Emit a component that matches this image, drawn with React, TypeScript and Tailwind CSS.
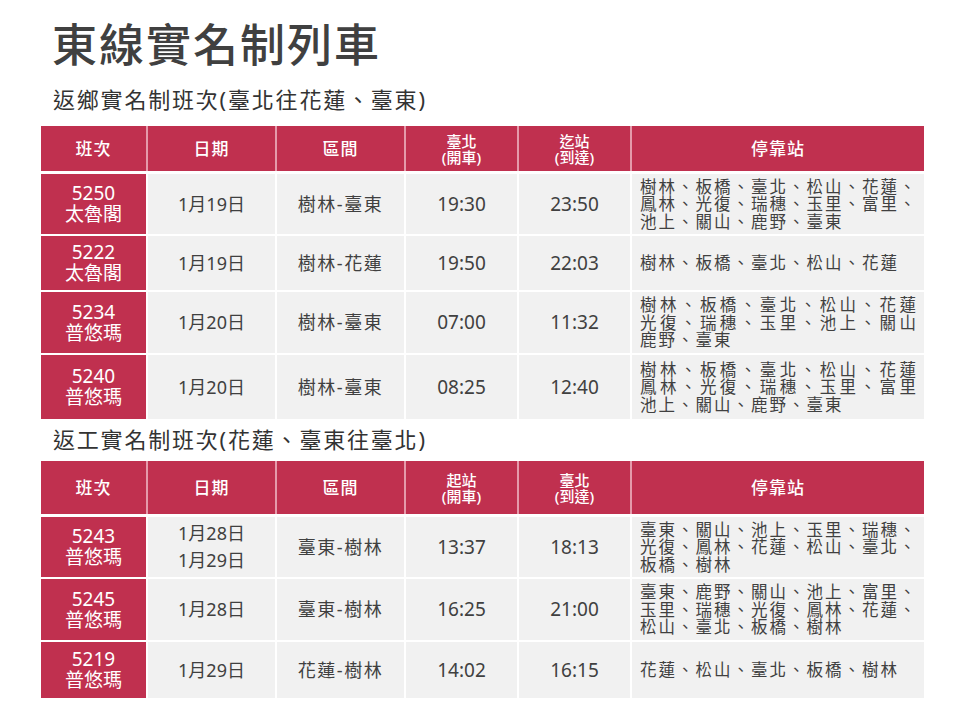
const FONT = { fontFamily: '"Noto Sans", "Noto Sans CJK TC", sans-serif' };

type Row = {
  no: string;
  name: string;
  dates: string[];
  route: string;
  dep: string;
  arr: string;
  stops: string[];
  justify?: boolean;
  h: string;
};

const OUTBOUND: Row[] = [
  {
    no: "5250",
    name: "太魯閣",
    dates: ["1月19日"],
    route: "樹林-臺東",
    dep: "19:30",
    arr: "23:50",
    stops: ["樹林、板橋、臺北、松山、花蓮、", "鳳林、光復、瑞穗、玉里、富里、", "池上、關山、鹿野、臺東"],
    h: "h-[60px]",
  },
  {
    no: "5222",
    name: "太魯閣",
    dates: ["1月19日"],
    route: "樹林-花蓮",
    dep: "19:50",
    arr: "22:03",
    stops: ["樹林、板橋、臺北、松山、花蓮"],
    h: "h-[54px]",
  },
  {
    no: "5234",
    name: "普悠瑪",
    dates: ["1月20日"],
    route: "樹林-臺東",
    dep: "07:00",
    arr: "11:32",
    stops: ["樹林、板橋、臺北、松山、花蓮", "光復、瑞穗、玉里、池上、關山", "鹿野、臺東"],
    justify: true,
    h: "h-[61px]",
  },
  {
    no: "5240",
    name: "普悠瑪",
    dates: ["1月20日"],
    route: "樹林-臺東",
    dep: "08:25",
    arr: "12:40",
    stops: ["樹林、板橋、臺北、松山、花蓮", "鳳林、光復、瑞穗、玉里、富里", "池上、關山、鹿野、臺東"],
    justify: true,
    h: "h-[64px]",
  },
];

const RETURN: Row[] = [
  {
    no: "5243",
    name: "普悠瑪",
    dates: ["1月28日", "1月29日"],
    route: "臺東-樹林",
    dep: "13:37",
    arr: "18:13",
    stops: ["臺東、關山、池上、玉里、瑞穗、", "光復、鳳林、花蓮、松山、臺北、", "板橋、樹林"],
    h: "h-[60px]",
  },
  {
    no: "5245",
    name: "普悠瑪",
    dates: ["1月28日"],
    route: "臺東-樹林",
    dep: "16:25",
    arr: "21:00",
    stops: ["臺東、鹿野、關山、池上、富里、", "玉里、瑞穗、光復、鳳林、花蓮、", "松山、臺北、板橋、樹林"],
    h: "h-[61px]",
  },
  {
    no: "5219",
    name: "普悠瑪",
    dates: ["1月29日"],
    route: "花蓮-樹林",
    dep: "14:02",
    arr: "16:15",
    stops: ["花蓮、松山、臺北、板橋、樹林"],
    h: "h-[56px]",
  },
];

const COLS = "grid grid-cols-[105px_127px_127px_111px_111px_292px] gap-x-[2px]";

function HeaderRow({ dep, arr, h }: { dep: string; arr: string; h: string }) {
  const cell = "flex flex-col items-center justify-center bg-[#c0304f] text-white";
  return (
    <div className={`${COLS} ${h} bg-[#e59aab]`}>
      <div className={`${cell} text-[17px] tracking-[1px] font-medium`}>班次</div>
      <div className={`${cell} text-[17px] tracking-[1px] font-medium`}>日期</div>
      <div className={`${cell} text-[17px] tracking-[1px] font-medium`}>區間</div>
      <div className={`${cell} text-[15px] leading-[16px] font-medium`}>
        <span>{dep}</span>
        <span>(開車)</span>
      </div>
      <div className={`${cell} text-[15px] leading-[16px] font-medium`}>
        <span>{arr}</span>
        <span>(到達)</span>
      </div>
      <div className={`${cell} text-[17px] tracking-[1px] font-medium`}>停靠站</div>
    </div>
  );
}

function BodyRow({ row }: { row: Row }) {
  const cell = "flex flex-col items-center justify-center bg-[#f1f1f1] text-[#404040]";
  return (
    <div className={`${COLS} ${row.h}`}>
      <div className="flex flex-col items-center justify-center bg-[#c0304f] text-white text-[19px] leading-[21px]">
        <span>{row.no}</span>
        <span>{row.name}</span>
      </div>
      <div className={`${cell} text-[18px] leading-[27px]`}>
        {row.dates.map((d) => (
          <span key={d}>{d}</span>
        ))}
      </div>
      <div className={`${cell} text-[18px] tracking-[1.5px]`}>{row.route}</div>
      <div className={`${cell} text-[19px]`}>{row.dep}</div>
      <div className={`${cell} text-[19px]`}>{row.arr}</div>
      <div className="flex flex-col justify-center bg-[#f1f1f1] pl-[8px] pr-[6px] text-[16.5px] leading-[17.5px] tracking-[2px] text-[#404040]">
        {row.stops.map((line, i) =>
          row.justify && i < row.stops.length - 1 ? (
            <div key={i} className="text-justify [text-align-last:justify] [text-justify:inter-character]">
              {line}
            </div>
          ) : (
            <div key={i} className="whitespace-nowrap">
              {line}
            </div>
          ),
        )}
      </div>
    </div>
  );
}

function ScheduleTable({
  rows,
  dep,
  arr,
  headerH,
}: {
  rows: Row[];
  dep: string;
  arr: string;
  headerH: string;
}) {
  return (
    <div className="ml-[41px] w-[883px] flex flex-col">
      <HeaderRow dep={dep} arr={arr} h={headerH} />
      <div className="mt-[3px] flex flex-col gap-y-[2px]">
        {rows.map((r) => (
          <BodyRow key={r.no} row={r} />
        ))}
      </div>
    </div>
  );
}

export default function App() {
  return (
    <div className="w-[960px] h-[720px] bg-white overflow-hidden [text-spacing-trim:space-all]" style={FONT}>
      <h1 className="pl-[52px] pt-[21px] text-[45px] leading-[48px] tracking-[2px] text-[#404040] font-medium">
        東線實名制列車
      </h1>
      <h2 className="pl-[53px] mt-[17px] text-[22px] leading-[26px] tracking-[1.8px] text-[#333333]">
        返鄉實名制班次(臺北往花蓮、臺東)
      </h2>
      <div className="mt-[14px]">
        <ScheduleTable rows={OUTBOUND} dep="臺北" arr="迄站" headerH="h-[45px]" />
      </div>
      <h2 className="pl-[53px] mt-[7px] text-[22px] leading-[26px] tracking-[1.8px] text-[#333333]">
        返工實名制班次(花蓮、臺東往臺北)
      </h2>
      <div className="mt-[9px]">
        <ScheduleTable rows={RETURN} dep="起站" arr="臺北" headerH="h-[53px]" />
      </div>
    </div>
  );
}
